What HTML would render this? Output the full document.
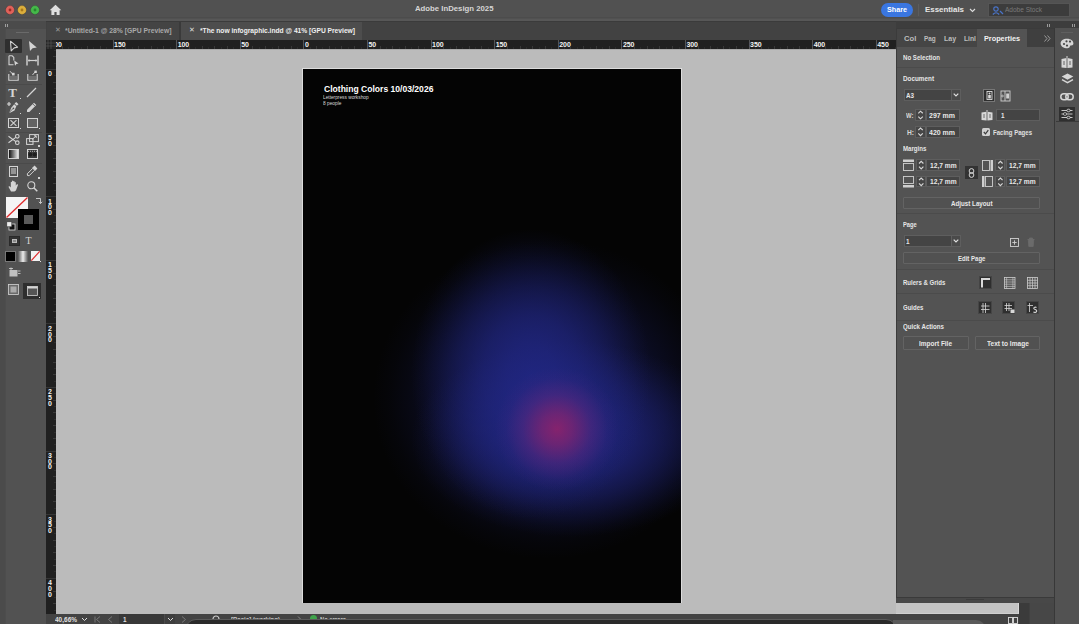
<!DOCTYPE html>
<html><head><meta charset="utf-8"><style>
*{margin:0;padding:0;box-sizing:border-box}
html,body{width:1079px;height:624px;overflow:hidden;background:#3f3f3f;font-family:"Liberation Sans",sans-serif;color:#ddd}
.a{position:absolute}
.t{position:absolute;white-space:nowrap;line-height:1}
svg{position:absolute;overflow:visible}
</style></head><body>
<div class="a" style="left:0px;top:0px;width:1079px;height:21px;background:#515151"></div>
<div class="a" style="left:0px;top:17px;width:1079px;height:1px;background:#4c4c4c"></div>
<div class="a" style="left:0px;top:19px;width:1079px;height:1.5px;background:#575757"></div>
<svg style="left:4.5px;top:4.5px;" width="10" height="10" viewBox="0 0 10 10"><circle cx="5" cy="5" r="4.4" fill="#e0625a" stroke="rgba(0,0,0,.25)" stroke-width=".6"/><circle cx="5" cy="5" r="1.4" fill="#8a1e18" opacity=".8"/></svg>
<svg style="left:17px;top:4.5px;" width="10" height="10" viewBox="0 0 10 10"><circle cx="5" cy="5" r="4.4" fill="#dcae3c" stroke="rgba(0,0,0,.25)" stroke-width=".6"/><circle cx="5" cy="5" r="1.4" fill="#9a6a10" opacity=".8"/></svg>
<svg style="left:29.5px;top:4.5px;" width="10" height="10" viewBox="0 0 10 10"><circle cx="5" cy="5" r="4.4" fill="#45b84a" stroke="rgba(0,0,0,.25)" stroke-width=".6"/><circle cx="5" cy="5" r="1.4" fill="#1f7a25" opacity=".8"/></svg>
<svg style="left:49px;top:4px;" width="13" height="12" viewBox="0 0 13 12"><path d="M6.5 0.8 L12.3 6.2 L10.6 6.2 L10.6 11 L7.6 11 L7.6 8 L5.4 8 L5.4 11 L2.4 11 L2.4 6.2 L0.7 6.2 Z" fill="#dedede"/></svg>
<div class="t" style="left:414.8px;top:4.60px;font-size:7.8px;color:#d6d6d6;font-weight:bold;font-family:'Liberation Sans';transform-origin:0 0;transform:scaleX(0.9955);">Adobe InDesign 2025</div>
<div class="a" style="left:881px;top:3px;width:32px;height:14px;background:#3a76e0;border-radius:7px"></div>
<div class="t" style="left:887px;top:6.23px;font-size:8px;color:#ffffff;font-weight:bold;font-family:'Liberation Sans';transform-origin:0 0;transform:scaleX(0.8995);">Share</div>
<div class="a" style="left:918px;top:4px;width:1px;height:12px;background:#5c5c5c"></div>
<div class="t" style="left:925px;top:6.23px;font-size:8px;color:#e6e6e6;font-weight:bold;font-family:'Liberation Sans';transform-origin:0 0;transform:scaleX(0.9854);">Essentials</div>
<svg style="left:969px;top:8px;" width="7" height="5" viewBox="0 0 7 5"><path d="M1 1 L3.5 3.5 L6 1" fill="none" stroke="#ddd" stroke-width="1.1"/></svg>
<div class="a" style="left:988px;top:3px;width:82px;height:14px;background:#3c3c3c;border:1px solid #555"></div>
<svg style="left:992px;top:6px;" width="12" height="9" viewBox="0 0 12 9"><circle cx="4" cy="3" r="2.2" fill="none" stroke="#4a74c8" stroke-width="1.2"/><path d="M0.8 8.5 Q4 5 7.2 8.5" fill="none" stroke="#4a74c8" stroke-width="1.2"/><path d="M8 5 L11 8" stroke="#4a74c8" stroke-width="1.2"/></svg>
<div class="t" style="left:1005px;top:6.25px;font-size:7.5px;color:#7a7a7a;font-weight:normal;font-family:'Liberation Sans';transform-origin:0 0;transform:scaleX(0.8700);">Adobe Stock</div>
<div class="a" style="left:0px;top:21px;width:1079px;height:603px;background:#3b3b3b"></div>
<div class="a" style="left:46px;top:21.5px;width:850px;height:18.5px;background:#424242"></div>
<div class="a" style="left:47px;top:21.5px;width:132px;height:18.5px;background:#444444"></div>
<div class="a" style="left:179px;top:21.5px;width:2px;height:18.5px;background:#3a3a3a"></div>
<div class="t" style="left:55px;top:26.5px;font-size:6.5px;color:#9a9a9a;font-weight:normal;">&#x2715;</div>
<div class="t" style="left:65.3px;top:27.13px;font-size:8px;color:#a8a8a8;font-weight:bold;font-family:'Liberation Sans';transform-origin:0 0;transform:scaleX(0.8471);">*Untitled-1 @ 28% [GPU Preview]</div>
<div class="a" style="left:181px;top:21.5px;width:181px;height:18.5px;background:#4d4d4d"></div>
<div class="t" style="left:189px;top:26.5px;font-size:6.5px;color:#dddddd;font-weight:normal;">&#x2715;</div>
<div class="t" style="left:199.7px;top:27.13px;font-size:8px;color:#f0f0f0;font-weight:bold;font-family:'Liberation Sans';transform-origin:0 0;transform:scaleX(0.8331);">*The now infographic.indd @ 41% [GPU Preview]</div>
<div class="a" style="left:0px;top:21px;width:46px;height:603px;background:#4b4b4b"></div>
<div class="a" style="left:5px;top:29px;width:41px;height:595px;background:#525252;border-left:1px solid #4d4d4d"></div>
<div class="a" style="left:4.5px;top:24px;width:1px;height:3px;background:#a0a0a0"></div>
<div class="a" style="left:6.5px;top:24px;width:1px;height:3px;background:#a0a0a0"></div>
<div class="a" style="left:16px;top:32px;width:13px;height:1px;background:#6a6a6a"></div>
<div class="a" style="left:56px;top:40px;width:840px;height:9px;background:#202020;overflow:hidden">
<div class="a" style="left:-7.10px;top:0;width:1px;height:9px;background:#555"></div>
<div class="t" style="left:-5.50px;top:1.2px;font-size:7px;color:#f2f2f2;font-weight:bold;letter-spacing:-0.1px">200</div>
<div class="a" style="left:-0.74px;top:7px;width:1px;height:2px;background:#2c2c2c"></div>
<div class="a" style="left:5.62px;top:6px;width:1px;height:3px;background:#383838"></div>
<div class="a" style="left:11.98px;top:7px;width:1px;height:2px;background:#2c2c2c"></div>
<div class="a" style="left:18.34px;top:6px;width:1px;height:3px;background:#383838"></div>
<div class="a" style="left:24.70px;top:7px;width:1px;height:2px;background:#2c2c2c"></div>
<div class="a" style="left:31.06px;top:6px;width:1px;height:3px;background:#383838"></div>
<div class="a" style="left:37.42px;top:7px;width:1px;height:2px;background:#2c2c2c"></div>
<div class="a" style="left:43.78px;top:6px;width:1px;height:3px;background:#383838"></div>
<div class="a" style="left:50.14px;top:7px;width:1px;height:2px;background:#2c2c2c"></div>
<div class="a" style="left:56.50px;top:0;width:1px;height:9px;background:#555"></div>
<div class="t" style="left:58.10px;top:1.2px;font-size:7px;color:#f2f2f2;font-weight:bold;letter-spacing:-0.1px">150</div>
<div class="a" style="left:62.86px;top:7px;width:1px;height:2px;background:#2c2c2c"></div>
<div class="a" style="left:69.22px;top:6px;width:1px;height:3px;background:#383838"></div>
<div class="a" style="left:75.58px;top:7px;width:1px;height:2px;background:#2c2c2c"></div>
<div class="a" style="left:81.94px;top:6px;width:1px;height:3px;background:#383838"></div>
<div class="a" style="left:88.30px;top:7px;width:1px;height:2px;background:#2c2c2c"></div>
<div class="a" style="left:94.66px;top:6px;width:1px;height:3px;background:#383838"></div>
<div class="a" style="left:101.02px;top:7px;width:1px;height:2px;background:#2c2c2c"></div>
<div class="a" style="left:107.38px;top:6px;width:1px;height:3px;background:#383838"></div>
<div class="a" style="left:113.74px;top:7px;width:1px;height:2px;background:#2c2c2c"></div>
<div class="a" style="left:120.10px;top:0;width:1px;height:9px;background:#555"></div>
<div class="t" style="left:121.70px;top:1.2px;font-size:7px;color:#f2f2f2;font-weight:bold;letter-spacing:-0.1px">100</div>
<div class="a" style="left:126.46px;top:7px;width:1px;height:2px;background:#2c2c2c"></div>
<div class="a" style="left:132.82px;top:6px;width:1px;height:3px;background:#383838"></div>
<div class="a" style="left:139.18px;top:7px;width:1px;height:2px;background:#2c2c2c"></div>
<div class="a" style="left:145.54px;top:6px;width:1px;height:3px;background:#383838"></div>
<div class="a" style="left:151.90px;top:7px;width:1px;height:2px;background:#2c2c2c"></div>
<div class="a" style="left:158.26px;top:6px;width:1px;height:3px;background:#383838"></div>
<div class="a" style="left:164.62px;top:7px;width:1px;height:2px;background:#2c2c2c"></div>
<div class="a" style="left:170.98px;top:6px;width:1px;height:3px;background:#383838"></div>
<div class="a" style="left:177.34px;top:7px;width:1px;height:2px;background:#2c2c2c"></div>
<div class="a" style="left:183.70px;top:0;width:1px;height:9px;background:#555"></div>
<div class="t" style="left:185.30px;top:1.2px;font-size:7px;color:#f2f2f2;font-weight:bold;letter-spacing:-0.1px">50</div>
<div class="a" style="left:190.06px;top:7px;width:1px;height:2px;background:#2c2c2c"></div>
<div class="a" style="left:196.42px;top:6px;width:1px;height:3px;background:#383838"></div>
<div class="a" style="left:202.78px;top:7px;width:1px;height:2px;background:#2c2c2c"></div>
<div class="a" style="left:209.14px;top:6px;width:1px;height:3px;background:#383838"></div>
<div class="a" style="left:215.50px;top:7px;width:1px;height:2px;background:#2c2c2c"></div>
<div class="a" style="left:221.86px;top:6px;width:1px;height:3px;background:#383838"></div>
<div class="a" style="left:228.22px;top:7px;width:1px;height:2px;background:#2c2c2c"></div>
<div class="a" style="left:234.58px;top:6px;width:1px;height:3px;background:#383838"></div>
<div class="a" style="left:240.94px;top:7px;width:1px;height:2px;background:#2c2c2c"></div>
<div class="a" style="left:247.30px;top:0;width:1px;height:9px;background:#555"></div>
<div class="t" style="left:248.90px;top:1.2px;font-size:7px;color:#f2f2f2;font-weight:bold;letter-spacing:-0.1px">0</div>
<div class="a" style="left:253.66px;top:7px;width:1px;height:2px;background:#2c2c2c"></div>
<div class="a" style="left:260.02px;top:6px;width:1px;height:3px;background:#383838"></div>
<div class="a" style="left:266.38px;top:7px;width:1px;height:2px;background:#2c2c2c"></div>
<div class="a" style="left:272.74px;top:6px;width:1px;height:3px;background:#383838"></div>
<div class="a" style="left:279.10px;top:7px;width:1px;height:2px;background:#2c2c2c"></div>
<div class="a" style="left:285.46px;top:6px;width:1px;height:3px;background:#383838"></div>
<div class="a" style="left:291.82px;top:7px;width:1px;height:2px;background:#2c2c2c"></div>
<div class="a" style="left:298.18px;top:6px;width:1px;height:3px;background:#383838"></div>
<div class="a" style="left:304.54px;top:7px;width:1px;height:2px;background:#2c2c2c"></div>
<div class="a" style="left:310.90px;top:0;width:1px;height:9px;background:#555"></div>
<div class="t" style="left:312.50px;top:1.2px;font-size:7px;color:#f2f2f2;font-weight:bold;letter-spacing:-0.1px">50</div>
<div class="a" style="left:317.26px;top:7px;width:1px;height:2px;background:#2c2c2c"></div>
<div class="a" style="left:323.62px;top:6px;width:1px;height:3px;background:#383838"></div>
<div class="a" style="left:329.98px;top:7px;width:1px;height:2px;background:#2c2c2c"></div>
<div class="a" style="left:336.34px;top:6px;width:1px;height:3px;background:#383838"></div>
<div class="a" style="left:342.70px;top:7px;width:1px;height:2px;background:#2c2c2c"></div>
<div class="a" style="left:349.06px;top:6px;width:1px;height:3px;background:#383838"></div>
<div class="a" style="left:355.42px;top:7px;width:1px;height:2px;background:#2c2c2c"></div>
<div class="a" style="left:361.78px;top:6px;width:1px;height:3px;background:#383838"></div>
<div class="a" style="left:368.14px;top:7px;width:1px;height:2px;background:#2c2c2c"></div>
<div class="a" style="left:374.50px;top:0;width:1px;height:9px;background:#555"></div>
<div class="t" style="left:376.10px;top:1.2px;font-size:7px;color:#f2f2f2;font-weight:bold;letter-spacing:-0.1px">100</div>
<div class="a" style="left:380.86px;top:7px;width:1px;height:2px;background:#2c2c2c"></div>
<div class="a" style="left:387.22px;top:6px;width:1px;height:3px;background:#383838"></div>
<div class="a" style="left:393.58px;top:7px;width:1px;height:2px;background:#2c2c2c"></div>
<div class="a" style="left:399.94px;top:6px;width:1px;height:3px;background:#383838"></div>
<div class="a" style="left:406.30px;top:7px;width:1px;height:2px;background:#2c2c2c"></div>
<div class="a" style="left:412.66px;top:6px;width:1px;height:3px;background:#383838"></div>
<div class="a" style="left:419.02px;top:7px;width:1px;height:2px;background:#2c2c2c"></div>
<div class="a" style="left:425.38px;top:6px;width:1px;height:3px;background:#383838"></div>
<div class="a" style="left:431.74px;top:7px;width:1px;height:2px;background:#2c2c2c"></div>
<div class="a" style="left:438.10px;top:0;width:1px;height:9px;background:#555"></div>
<div class="t" style="left:439.70px;top:1.2px;font-size:7px;color:#f2f2f2;font-weight:bold;letter-spacing:-0.1px">150</div>
<div class="a" style="left:444.46px;top:7px;width:1px;height:2px;background:#2c2c2c"></div>
<div class="a" style="left:450.82px;top:6px;width:1px;height:3px;background:#383838"></div>
<div class="a" style="left:457.18px;top:7px;width:1px;height:2px;background:#2c2c2c"></div>
<div class="a" style="left:463.54px;top:6px;width:1px;height:3px;background:#383838"></div>
<div class="a" style="left:469.90px;top:7px;width:1px;height:2px;background:#2c2c2c"></div>
<div class="a" style="left:476.26px;top:6px;width:1px;height:3px;background:#383838"></div>
<div class="a" style="left:482.62px;top:7px;width:1px;height:2px;background:#2c2c2c"></div>
<div class="a" style="left:488.98px;top:6px;width:1px;height:3px;background:#383838"></div>
<div class="a" style="left:495.34px;top:7px;width:1px;height:2px;background:#2c2c2c"></div>
<div class="a" style="left:501.70px;top:0;width:1px;height:9px;background:#555"></div>
<div class="t" style="left:503.30px;top:1.2px;font-size:7px;color:#f2f2f2;font-weight:bold;letter-spacing:-0.1px">200</div>
<div class="a" style="left:508.06px;top:7px;width:1px;height:2px;background:#2c2c2c"></div>
<div class="a" style="left:514.42px;top:6px;width:1px;height:3px;background:#383838"></div>
<div class="a" style="left:520.78px;top:7px;width:1px;height:2px;background:#2c2c2c"></div>
<div class="a" style="left:527.14px;top:6px;width:1px;height:3px;background:#383838"></div>
<div class="a" style="left:533.50px;top:7px;width:1px;height:2px;background:#2c2c2c"></div>
<div class="a" style="left:539.86px;top:6px;width:1px;height:3px;background:#383838"></div>
<div class="a" style="left:546.22px;top:7px;width:1px;height:2px;background:#2c2c2c"></div>
<div class="a" style="left:552.58px;top:6px;width:1px;height:3px;background:#383838"></div>
<div class="a" style="left:558.94px;top:7px;width:1px;height:2px;background:#2c2c2c"></div>
<div class="a" style="left:565.30px;top:0;width:1px;height:9px;background:#555"></div>
<div class="t" style="left:566.90px;top:1.2px;font-size:7px;color:#f2f2f2;font-weight:bold;letter-spacing:-0.1px">250</div>
<div class="a" style="left:571.66px;top:7px;width:1px;height:2px;background:#2c2c2c"></div>
<div class="a" style="left:578.02px;top:6px;width:1px;height:3px;background:#383838"></div>
<div class="a" style="left:584.38px;top:7px;width:1px;height:2px;background:#2c2c2c"></div>
<div class="a" style="left:590.74px;top:6px;width:1px;height:3px;background:#383838"></div>
<div class="a" style="left:597.10px;top:7px;width:1px;height:2px;background:#2c2c2c"></div>
<div class="a" style="left:603.46px;top:6px;width:1px;height:3px;background:#383838"></div>
<div class="a" style="left:609.82px;top:7px;width:1px;height:2px;background:#2c2c2c"></div>
<div class="a" style="left:616.18px;top:6px;width:1px;height:3px;background:#383838"></div>
<div class="a" style="left:622.54px;top:7px;width:1px;height:2px;background:#2c2c2c"></div>
<div class="a" style="left:628.90px;top:0;width:1px;height:9px;background:#555"></div>
<div class="t" style="left:630.50px;top:1.2px;font-size:7px;color:#f2f2f2;font-weight:bold;letter-spacing:-0.1px">300</div>
<div class="a" style="left:635.26px;top:7px;width:1px;height:2px;background:#2c2c2c"></div>
<div class="a" style="left:641.62px;top:6px;width:1px;height:3px;background:#383838"></div>
<div class="a" style="left:647.98px;top:7px;width:1px;height:2px;background:#2c2c2c"></div>
<div class="a" style="left:654.34px;top:6px;width:1px;height:3px;background:#383838"></div>
<div class="a" style="left:660.70px;top:7px;width:1px;height:2px;background:#2c2c2c"></div>
<div class="a" style="left:667.06px;top:6px;width:1px;height:3px;background:#383838"></div>
<div class="a" style="left:673.42px;top:7px;width:1px;height:2px;background:#2c2c2c"></div>
<div class="a" style="left:679.78px;top:6px;width:1px;height:3px;background:#383838"></div>
<div class="a" style="left:686.14px;top:7px;width:1px;height:2px;background:#2c2c2c"></div>
<div class="a" style="left:692.50px;top:0;width:1px;height:9px;background:#555"></div>
<div class="t" style="left:694.10px;top:1.2px;font-size:7px;color:#f2f2f2;font-weight:bold;letter-spacing:-0.1px">350</div>
<div class="a" style="left:698.86px;top:7px;width:1px;height:2px;background:#2c2c2c"></div>
<div class="a" style="left:705.22px;top:6px;width:1px;height:3px;background:#383838"></div>
<div class="a" style="left:711.58px;top:7px;width:1px;height:2px;background:#2c2c2c"></div>
<div class="a" style="left:717.94px;top:6px;width:1px;height:3px;background:#383838"></div>
<div class="a" style="left:724.30px;top:7px;width:1px;height:2px;background:#2c2c2c"></div>
<div class="a" style="left:730.66px;top:6px;width:1px;height:3px;background:#383838"></div>
<div class="a" style="left:737.02px;top:7px;width:1px;height:2px;background:#2c2c2c"></div>
<div class="a" style="left:743.38px;top:6px;width:1px;height:3px;background:#383838"></div>
<div class="a" style="left:749.74px;top:7px;width:1px;height:2px;background:#2c2c2c"></div>
<div class="a" style="left:756.10px;top:0;width:1px;height:9px;background:#555"></div>
<div class="t" style="left:757.70px;top:1.2px;font-size:7px;color:#f2f2f2;font-weight:bold;letter-spacing:-0.1px">400</div>
<div class="a" style="left:762.46px;top:7px;width:1px;height:2px;background:#2c2c2c"></div>
<div class="a" style="left:768.82px;top:6px;width:1px;height:3px;background:#383838"></div>
<div class="a" style="left:775.18px;top:7px;width:1px;height:2px;background:#2c2c2c"></div>
<div class="a" style="left:781.54px;top:6px;width:1px;height:3px;background:#383838"></div>
<div class="a" style="left:787.90px;top:7px;width:1px;height:2px;background:#2c2c2c"></div>
<div class="a" style="left:794.26px;top:6px;width:1px;height:3px;background:#383838"></div>
<div class="a" style="left:800.62px;top:7px;width:1px;height:2px;background:#2c2c2c"></div>
<div class="a" style="left:806.98px;top:6px;width:1px;height:3px;background:#383838"></div>
<div class="a" style="left:813.34px;top:7px;width:1px;height:2px;background:#2c2c2c"></div>
<div class="a" style="left:819.70px;top:0;width:1px;height:9px;background:#555"></div>
<div class="t" style="left:821.30px;top:1.2px;font-size:7px;color:#f2f2f2;font-weight:bold;letter-spacing:-0.1px">450</div>
<div class="a" style="left:826.06px;top:7px;width:1px;height:2px;background:#2c2c2c"></div>
<div class="a" style="left:832.42px;top:6px;width:1px;height:3px;background:#383838"></div>
<div class="a" style="left:838.78px;top:7px;width:1px;height:2px;background:#2c2c2c"></div>
<div class="a" style="left:845.14px;top:6px;width:1px;height:3px;background:#383838"></div>
<div class="a" style="left:851.50px;top:7px;width:1px;height:2px;background:#2c2c2c"></div>
</div>
<div class="a" style="left:46px;top:49px;width:10px;height:565px;background:#202020;overflow:hidden">
<div class="a" style="left:7px;top:-5.44px;width:3px;height:1px;background:#3a3a3a"></div>
<div class="a" style="left:8px;top:0.92px;width:2px;height:1px;background:#2e2e2e"></div>
<div class="a" style="left:7px;top:7.28px;width:3px;height:1px;background:#3a3a3a"></div>
<div class="a" style="left:8px;top:13.64px;width:2px;height:1px;background:#2e2e2e"></div>
<div class="a" style="left:0;top:20.00px;width:10px;height:1px;background:#363636"></div>
<div class="t" style="left:2.1px;top:21.37px;font-size:7px;color:#f0f0f0;font-weight:bold">0</div>
<div class="a" style="left:8px;top:26.36px;width:2px;height:1px;background:#2e2e2e"></div>
<div class="a" style="left:7px;top:32.72px;width:3px;height:1px;background:#3a3a3a"></div>
<div class="a" style="left:8px;top:39.08px;width:2px;height:1px;background:#2e2e2e"></div>
<div class="a" style="left:7px;top:45.44px;width:3px;height:1px;background:#3a3a3a"></div>
<div class="a" style="left:8px;top:51.80px;width:2px;height:1px;background:#2e2e2e"></div>
<div class="a" style="left:7px;top:58.16px;width:3px;height:1px;background:#3a3a3a"></div>
<div class="a" style="left:8px;top:64.52px;width:2px;height:1px;background:#2e2e2e"></div>
<div class="a" style="left:7px;top:70.88px;width:3px;height:1px;background:#3a3a3a"></div>
<div class="a" style="left:8px;top:77.24px;width:2px;height:1px;background:#2e2e2e"></div>
<div class="a" style="left:0;top:83.60px;width:10px;height:1px;background:#363636"></div>
<div class="t" style="left:2.1px;top:84.97px;font-size:7px;color:#f0f0f0;font-weight:bold">5</div>
<div class="t" style="left:2.1px;top:90.72px;font-size:7px;color:#f0f0f0;font-weight:bold">0</div>
<div class="a" style="left:8px;top:89.96px;width:2px;height:1px;background:#2e2e2e"></div>
<div class="a" style="left:7px;top:96.32px;width:3px;height:1px;background:#3a3a3a"></div>
<div class="a" style="left:8px;top:102.68px;width:2px;height:1px;background:#2e2e2e"></div>
<div class="a" style="left:7px;top:109.04px;width:3px;height:1px;background:#3a3a3a"></div>
<div class="a" style="left:8px;top:115.40px;width:2px;height:1px;background:#2e2e2e"></div>
<div class="a" style="left:7px;top:121.76px;width:3px;height:1px;background:#3a3a3a"></div>
<div class="a" style="left:8px;top:128.12px;width:2px;height:1px;background:#2e2e2e"></div>
<div class="a" style="left:7px;top:134.48px;width:3px;height:1px;background:#3a3a3a"></div>
<div class="a" style="left:8px;top:140.84px;width:2px;height:1px;background:#2e2e2e"></div>
<div class="a" style="left:0;top:147.20px;width:10px;height:1px;background:#363636"></div>
<div class="t" style="left:2.1px;top:148.57px;font-size:7px;color:#f0f0f0;font-weight:bold">1</div>
<div class="t" style="left:2.1px;top:154.32px;font-size:7px;color:#f0f0f0;font-weight:bold">0</div>
<div class="t" style="left:2.1px;top:160.07px;font-size:7px;color:#f0f0f0;font-weight:bold">0</div>
<div class="a" style="left:8px;top:153.56px;width:2px;height:1px;background:#2e2e2e"></div>
<div class="a" style="left:7px;top:159.92px;width:3px;height:1px;background:#3a3a3a"></div>
<div class="a" style="left:8px;top:166.28px;width:2px;height:1px;background:#2e2e2e"></div>
<div class="a" style="left:7px;top:172.64px;width:3px;height:1px;background:#3a3a3a"></div>
<div class="a" style="left:8px;top:179.00px;width:2px;height:1px;background:#2e2e2e"></div>
<div class="a" style="left:7px;top:185.36px;width:3px;height:1px;background:#3a3a3a"></div>
<div class="a" style="left:8px;top:191.72px;width:2px;height:1px;background:#2e2e2e"></div>
<div class="a" style="left:7px;top:198.08px;width:3px;height:1px;background:#3a3a3a"></div>
<div class="a" style="left:8px;top:204.44px;width:2px;height:1px;background:#2e2e2e"></div>
<div class="a" style="left:0;top:210.80px;width:10px;height:1px;background:#363636"></div>
<div class="t" style="left:2.1px;top:212.17px;font-size:7px;color:#f0f0f0;font-weight:bold">1</div>
<div class="t" style="left:2.1px;top:217.92px;font-size:7px;color:#f0f0f0;font-weight:bold">5</div>
<div class="t" style="left:2.1px;top:223.67px;font-size:7px;color:#f0f0f0;font-weight:bold">0</div>
<div class="a" style="left:8px;top:217.16px;width:2px;height:1px;background:#2e2e2e"></div>
<div class="a" style="left:7px;top:223.52px;width:3px;height:1px;background:#3a3a3a"></div>
<div class="a" style="left:8px;top:229.88px;width:2px;height:1px;background:#2e2e2e"></div>
<div class="a" style="left:7px;top:236.24px;width:3px;height:1px;background:#3a3a3a"></div>
<div class="a" style="left:8px;top:242.60px;width:2px;height:1px;background:#2e2e2e"></div>
<div class="a" style="left:7px;top:248.96px;width:3px;height:1px;background:#3a3a3a"></div>
<div class="a" style="left:8px;top:255.32px;width:2px;height:1px;background:#2e2e2e"></div>
<div class="a" style="left:7px;top:261.68px;width:3px;height:1px;background:#3a3a3a"></div>
<div class="a" style="left:8px;top:268.04px;width:2px;height:1px;background:#2e2e2e"></div>
<div class="a" style="left:0;top:274.40px;width:10px;height:1px;background:#363636"></div>
<div class="t" style="left:2.1px;top:275.77px;font-size:7px;color:#f0f0f0;font-weight:bold">2</div>
<div class="t" style="left:2.1px;top:281.52px;font-size:7px;color:#f0f0f0;font-weight:bold">0</div>
<div class="t" style="left:2.1px;top:287.27px;font-size:7px;color:#f0f0f0;font-weight:bold">0</div>
<div class="a" style="left:8px;top:280.76px;width:2px;height:1px;background:#2e2e2e"></div>
<div class="a" style="left:7px;top:287.12px;width:3px;height:1px;background:#3a3a3a"></div>
<div class="a" style="left:8px;top:293.48px;width:2px;height:1px;background:#2e2e2e"></div>
<div class="a" style="left:7px;top:299.84px;width:3px;height:1px;background:#3a3a3a"></div>
<div class="a" style="left:8px;top:306.20px;width:2px;height:1px;background:#2e2e2e"></div>
<div class="a" style="left:7px;top:312.56px;width:3px;height:1px;background:#3a3a3a"></div>
<div class="a" style="left:8px;top:318.92px;width:2px;height:1px;background:#2e2e2e"></div>
<div class="a" style="left:7px;top:325.28px;width:3px;height:1px;background:#3a3a3a"></div>
<div class="a" style="left:8px;top:331.64px;width:2px;height:1px;background:#2e2e2e"></div>
<div class="a" style="left:0;top:338.00px;width:10px;height:1px;background:#363636"></div>
<div class="t" style="left:2.1px;top:339.37px;font-size:7px;color:#f0f0f0;font-weight:bold">2</div>
<div class="t" style="left:2.1px;top:345.12px;font-size:7px;color:#f0f0f0;font-weight:bold">5</div>
<div class="t" style="left:2.1px;top:350.87px;font-size:7px;color:#f0f0f0;font-weight:bold">0</div>
<div class="a" style="left:8px;top:344.36px;width:2px;height:1px;background:#2e2e2e"></div>
<div class="a" style="left:7px;top:350.72px;width:3px;height:1px;background:#3a3a3a"></div>
<div class="a" style="left:8px;top:357.08px;width:2px;height:1px;background:#2e2e2e"></div>
<div class="a" style="left:7px;top:363.44px;width:3px;height:1px;background:#3a3a3a"></div>
<div class="a" style="left:8px;top:369.80px;width:2px;height:1px;background:#2e2e2e"></div>
<div class="a" style="left:7px;top:376.16px;width:3px;height:1px;background:#3a3a3a"></div>
<div class="a" style="left:8px;top:382.52px;width:2px;height:1px;background:#2e2e2e"></div>
<div class="a" style="left:7px;top:388.88px;width:3px;height:1px;background:#3a3a3a"></div>
<div class="a" style="left:8px;top:395.24px;width:2px;height:1px;background:#2e2e2e"></div>
<div class="a" style="left:0;top:401.60px;width:10px;height:1px;background:#363636"></div>
<div class="t" style="left:2.1px;top:402.97px;font-size:7px;color:#f0f0f0;font-weight:bold">3</div>
<div class="t" style="left:2.1px;top:408.72px;font-size:7px;color:#f0f0f0;font-weight:bold">0</div>
<div class="t" style="left:2.1px;top:414.47px;font-size:7px;color:#f0f0f0;font-weight:bold">0</div>
<div class="a" style="left:8px;top:407.96px;width:2px;height:1px;background:#2e2e2e"></div>
<div class="a" style="left:7px;top:414.32px;width:3px;height:1px;background:#3a3a3a"></div>
<div class="a" style="left:8px;top:420.68px;width:2px;height:1px;background:#2e2e2e"></div>
<div class="a" style="left:7px;top:427.04px;width:3px;height:1px;background:#3a3a3a"></div>
<div class="a" style="left:8px;top:433.40px;width:2px;height:1px;background:#2e2e2e"></div>
<div class="a" style="left:7px;top:439.76px;width:3px;height:1px;background:#3a3a3a"></div>
<div class="a" style="left:8px;top:446.12px;width:2px;height:1px;background:#2e2e2e"></div>
<div class="a" style="left:7px;top:452.48px;width:3px;height:1px;background:#3a3a3a"></div>
<div class="a" style="left:8px;top:458.84px;width:2px;height:1px;background:#2e2e2e"></div>
<div class="a" style="left:0;top:465.20px;width:10px;height:1px;background:#363636"></div>
<div class="t" style="left:2.1px;top:466.57px;font-size:7px;color:#f0f0f0;font-weight:bold">3</div>
<div class="t" style="left:2.1px;top:472.32px;font-size:7px;color:#f0f0f0;font-weight:bold">5</div>
<div class="t" style="left:2.1px;top:478.07px;font-size:7px;color:#f0f0f0;font-weight:bold">0</div>
<div class="a" style="left:8px;top:471.56px;width:2px;height:1px;background:#2e2e2e"></div>
<div class="a" style="left:7px;top:477.92px;width:3px;height:1px;background:#3a3a3a"></div>
<div class="a" style="left:8px;top:484.28px;width:2px;height:1px;background:#2e2e2e"></div>
<div class="a" style="left:7px;top:490.64px;width:3px;height:1px;background:#3a3a3a"></div>
<div class="a" style="left:8px;top:497.00px;width:2px;height:1px;background:#2e2e2e"></div>
<div class="a" style="left:7px;top:503.36px;width:3px;height:1px;background:#3a3a3a"></div>
<div class="a" style="left:8px;top:509.72px;width:2px;height:1px;background:#2e2e2e"></div>
<div class="a" style="left:7px;top:516.08px;width:3px;height:1px;background:#3a3a3a"></div>
<div class="a" style="left:8px;top:522.44px;width:2px;height:1px;background:#2e2e2e"></div>
<div class="a" style="left:0;top:528.80px;width:10px;height:1px;background:#363636"></div>
<div class="t" style="left:2.1px;top:530.17px;font-size:7px;color:#f0f0f0;font-weight:bold">4</div>
<div class="t" style="left:2.1px;top:535.92px;font-size:7px;color:#f0f0f0;font-weight:bold">0</div>
<div class="t" style="left:2.1px;top:541.67px;font-size:7px;color:#f0f0f0;font-weight:bold">0</div>
<div class="a" style="left:8px;top:535.16px;width:2px;height:1px;background:#2e2e2e"></div>
<div class="a" style="left:7px;top:541.52px;width:3px;height:1px;background:#3a3a3a"></div>
<div class="a" style="left:8px;top:547.88px;width:2px;height:1px;background:#2e2e2e"></div>
<div class="a" style="left:7px;top:554.24px;width:3px;height:1px;background:#3a3a3a"></div>
<div class="a" style="left:8px;top:560.60px;width:2px;height:1px;background:#2e2e2e"></div>
<div class="a" style="left:7px;top:566.96px;width:3px;height:1px;background:#3a3a3a"></div>
<div class="a" style="left:8px;top:573.32px;width:2px;height:1px;background:#2e2e2e"></div>
</div>
<div class="a" style="left:46px;top:40px;width:10px;height:9px;background:#262626"></div>
<svg style="left:46px;top:40px;" width="10" height="9" viewBox="0 0 10 9"><path d="M2 0 V9 M5 0 V9 M0 3 H10 M0 6 H10" stroke="#555" stroke-width="0.7"/></svg>
<div class="a" style="left:56px;top:49px;width:840px;height:565px;background:#bbbbbb"></div>
<div class="a" style="left:56px;top:49px;width:840px;height:1px;background:#a8a8a8"></div>
<div class="a" style="left:302px;top:68px;width:380px;height:537px;background:#dcdcdc"></div>
<div class="a" style="left:303px;top:69px;width:378px;height:535px;background:radial-gradient(circle 62px at 254px 360px, rgba(155,34,105,.82) 0%, rgba(145,36,110,.66) 25%, rgba(120,40,125,.36) 55%, rgba(95,40,130,.1) 82%, rgba(90,40,130,0) 100%), radial-gradient(ellipse 120px 145px at 228px 305px, rgba(34,40,136,0.800) 0%, rgba(34,40,136,0.744) 20%, rgba(34,40,136,0.608) 40%, rgba(34,40,136,0.400) 60%, rgba(34,40,136,0.192) 78%, rgba(34,40,136,0.072) 90%, rgba(34,40,136,0.000) 100%), radial-gradient(ellipse 160px 98px at 268px 370px, rgba(34,40,136,0.800) 0%, rgba(34,40,136,0.744) 20%, rgba(34,40,136,0.608) 40%, rgba(34,40,136,0.400) 60%, rgba(34,40,136,0.192) 78%, rgba(34,40,136,0.072) 90%, rgba(34,40,136,0.000) 100%), radial-gradient(ellipse 175px 160px at 245px 330px, rgba(34,40,136,0.500) 0%, rgba(34,40,136,0.465) 20%, rgba(34,40,136,0.380) 40%, rgba(34,40,136,0.250) 60%, rgba(34,40,136,0.120) 78%, rgba(34,40,136,0.045) 90%, rgba(34,40,136,0.000) 100%), #040404"></div>
<div class="t" style="left:323.6px;top:84.97px;font-size:8.3px;color:#ffffff;font-weight:bold;font-family:'Liberation Sans';transform-origin:0 0;transform:scaleX(1.0316);">Clothing Colors 10/03/2026</div>
<div class="t" style="left:323.4px;top:95.17px;font-size:5px;color:#d8d8d8;font-weight:normal;font-family:'Liberation Sans';transform-origin:0 0;transform:scaleX(0.9540);">Letterpress workshop</div>
<div class="t" style="left:323.4px;top:101.37px;font-size:5px;color:#d8d8d8;font-weight:normal;font-family:'Liberation Sans';transform-origin:0 0;transform:scaleX(0.9591);">8 people</div>
<div class="a" style="left:896px;top:21px;width:183px;height:603px;background:#3d3d3d"></div>
<div class="a" style="left:1046.5px;top:24px;width:1px;height:3px;background:#9a9a9a"></div>
<div class="a" style="left:1048.5px;top:24px;width:1px;height:3px;background:#9a9a9a"></div>
<div class="a" style="left:1071.5px;top:24px;width:1px;height:3px;background:#9a9a9a"></div>
<div class="a" style="left:1073.5px;top:24px;width:1px;height:3px;background:#9a9a9a"></div>
<div class="a" style="left:896px;top:28px;width:159px;height:575px;background:#535353;border:1px solid #3b3b3b"></div>
<div class="a" style="left:896px;top:597px;width:159px;height:6px;background:#484848;border-top:1px solid #3a3a3a"></div>
<div class="a" style="left:966px;top:599px;width:18px;height:1px;background:#3c3c3c"></div>
<div class="a" style="left:897px;top:29px;width:157px;height:18px;background:#454545"></div>
<div class="a" style="left:977px;top:29px;width:50px;height:18px;background:#535353"></div>
<div class="a" style="left:1027px;top:29px;width:27px;height:18px;background:#3f3f3f"></div>
<div class="t" style="left:903.7px;top:35.31px;font-size:7.2px;color:#bdbdbd;font-weight:bold;font-family:'Liberation Sans';transform-origin:0 0;transform:scaleX(1.0624);">Col</div>
<div class="t" style="left:924.2px;top:35.31px;font-size:7.2px;color:#bdbdbd;font-weight:bold;font-family:'Liberation Sans';transform-origin:0 0;transform:scaleX(0.8952);">Pag</div>
<div class="t" style="left:943.8px;top:35.31px;font-size:7.2px;color:#bdbdbd;font-weight:bold;font-family:'Liberation Sans';transform-origin:0 0;transform:scaleX(0.9851);">Lay</div>
<div class="t" style="left:964px;top:35.31px;font-size:7.2px;color:#bdbdbd;font-weight:bold;font-family:'Liberation Sans';transform-origin:0 0;transform:scaleX(0.9394);">Linl</div>
<div class="t" style="left:983.8px;top:35.31px;font-size:7.2px;color:#f2f2f2;font-weight:bold;font-family:'Liberation Sans';transform-origin:0 0;transform:scaleX(1.0154);">Properties</div>
<svg style="left:1044px;top:35px;" width="7" height="7" viewBox="0 0 7 7"><path d="M0.5 0.5 L3 3.5 L0.5 6.5 M3.5 0.5 L6 3.5 L3.5 6.5" fill="none" stroke="#9a9a9a" stroke-width="1"/></svg>
<div class="t" style="left:903.1px;top:53.81px;font-size:7.2px;color:#e6e6e6;font-weight:bold;font-family:'Liberation Sans';transform-origin:0 0;transform:scaleX(0.8499);">No Selection</div>
<div class="a" style="left:897px;top:67px;width:157px;height:1px;background:#4b4b4b"></div>
<div class="t" style="left:902.7px;top:75.01px;font-size:7.2px;color:#e6e6e6;font-weight:bold;font-family:'Liberation Sans';transform-origin:0 0;transform:scaleX(0.8822);">Document</div>
<div class="a" style="left:904px;top:88.5px;width:56.5px;height:12.7px;background:#444444;border:1px solid #5e5e5e"></div>
<div class="a" style="left:950.5px;top:88.5px;width:10px;height:12.7px;background:#4a4a4a;border:1px solid #5e5e5e"></div>
<div class="t" style="left:905.5px;top:92.27px;font-size:7px;color:#e8e8e8;font-weight:bold;font-family:'Liberation Sans';transform-origin:0 0;transform:scaleX(0.8940);">A3</div>
<svg style="left:952.5px;top:93.0px;" width="6" height="4" viewBox="0 0 6 4"><path d="M0.7 0.7 L3 3 L5.3 0.7" fill="none" stroke="#e0e0e0" stroke-width="1.2"/></svg>
<div class="a" style="left:982.8px;top:89.3px;width:12.6px;height:12.6px;background:#2e2e2e;border:1px solid #777"></div>
<svg style="left:983.8px;top:90.3px;" width="11" height="11" viewBox="0 0 11 11"><rect x="3" y="1.5" width="5" height="8" fill="none" stroke="#ddd" stroke-width=".9"/><circle cx="5.5" cy="3.5" r="1" fill="#ddd"/><rect x="4.2" y="5" width="2.6" height="3.5" fill="#ddd"/></svg>
<svg style="left:999.5px;top:89.5px;" width="11" height="12" viewBox="0 0 11 12"><rect x="1" y="1" width="9" height="10" fill="none" stroke="#cfcfcf" stroke-width=".9"/><path d="M5 1 V11" stroke="#cfcfcf" stroke-width=".9"/><path d="M1.5 6 H4 M2.8 4.8 L1.5 6 L2.8 7.2" fill="none" stroke="#cfcfcf" stroke-width=".8"/><rect x="6.2" y="3.5" width="2.8" height="5" fill="#cfcfcf"/></svg>
<div class="t" style="left:906.4px;top:111.57px;font-size:7px;color:#d8d8d8;font-weight:bold;font-family:'Liberation Sans';transform-origin:0 0;transform:scaleX(0.8398);">W:</div>
<div class="t" style="left:906.6px;top:128.57px;font-size:7px;color:#d8d8d8;font-weight:bold;font-family:'Liberation Sans';transform-origin:0 0;transform:scaleX(0.9477);">H:</div>
<div class="a" style="left:915.3px;top:109.3px;width:11.1px;height:11.9px;background:#464646;border:1px solid #5e5e5e"></div>
<svg style="left:915.3px;top:109.3px;" width="11.1" height="11.9" viewBox="0 0 11.1 11.9"><path d="M3.3 4.3 L5.5 2.2 L7.8 4.3 M3.3 7.6 L5.5 9.8 L7.8 7.6" fill="none" stroke="#d8d8d8" stroke-width="1.15"/></svg>
<div class="a" style="left:926.4px;top:109.3px;width:34.1px;height:11.9px;background:#444444;border:1px solid #5e5e5e"></div>
<div class="t" style="left:929.4px;top:111.57px;font-size:7px;color:#e8e8e8;font-weight:bold;font-family:'Liberation Sans';transform-origin:0 0;transform:scaleX(0.9972);">297 mm</div>
<div class="a" style="left:915.3px;top:126px;width:11.1px;height:11.5px;background:#464646;border:1px solid #5e5e5e"></div>
<svg style="left:915.3px;top:126px;" width="11.1" height="11.5" viewBox="0 0 11.1 11.5"><path d="M3.3 4.2 L5.5 2.0 L7.8 4.2 M3.3 7.3 L5.5 9.6 L7.8 7.3" fill="none" stroke="#d8d8d8" stroke-width="1.15"/></svg>
<div class="a" style="left:926.4px;top:126px;width:34.1px;height:11.5px;background:#444444;border:1px solid #5e5e5e"></div>
<div class="t" style="left:929.4px;top:128.57px;font-size:7px;color:#e8e8e8;font-weight:bold;font-family:'Liberation Sans';transform-origin:0 0;transform:scaleX(0.9972);">420 mm</div>
<svg style="left:980.6px;top:109.5px;" width="12" height="11" viewBox="0 0 12 11"><path d="M0.5 2.5 L5.6 1.8 V10.5 L0.5 10 Z M6.4 1.8 L11.5 2.5 V10 L6.4 10.5 Z" fill="#d8d8d8"/><path d="M6 0 V1.8" stroke="#d8d8d8" stroke-width="1"/><path d="M3 4 V8 M9 4 V8" stroke="#535353" stroke-width=".8"/></svg>
<div class="a" style="left:996.1px;top:109.3px;width:43.8px;height:11.9px;background:#444444;border:1px solid #5e5e5e"></div>
<div class="t" style="left:1000.5px;top:111.57px;font-size:7px;color:#e8e8e8;font-weight:bold;font-family:'Liberation Sans';transform-origin:0 0;transform:scaleX(0.8990);">1</div>
<div class="a" style="left:982px;top:127.9px;width:7.8px;height:8.1px;background:#cfcfcf;border-radius:1.5px"></div>
<svg style="left:982px;top:127.9px;" width="8" height="8" viewBox="0 0 8 8"><path d="M1.8 4 L3.5 5.8 L6.3 2.2" fill="none" stroke="#3a3a3a" stroke-width="1.2"/></svg>
<div class="t" style="left:993.2px;top:128.57px;font-size:7px;color:#e0e0e0;font-weight:bold;font-family:'Liberation Sans';transform-origin:0 0;transform:scaleX(0.8642);">Facing Pages</div>
<div class="t" style="left:903px;top:145.01px;font-size:7.2px;color:#e6e6e6;font-weight:bold;font-family:'Liberation Sans';transform-origin:0 0;transform:scaleX(0.8492);">Margins</div>
<svg style="left:903.4px;top:159.3px;" width="11" height="12" viewBox="0 0 11 12"><rect x="0.5" y="4.5" width="10" height="7" fill="none" stroke="#cfcfcf" stroke-width=".9"/><rect x="0" y="0.5" width="11" height="2.5" fill="#cfcfcf"/></svg>
<svg style="left:903.4px;top:175.8px;" width="11" height="12" viewBox="0 0 11 12"><rect x="0.5" y="0.5" width="10" height="7" fill="none" stroke="#cfcfcf" stroke-width=".9"/><rect x="0" y="9" width="11" height="2.5" fill="#cfcfcf"/></svg>
<svg style="left:981.8px;top:159.8px;" width="11" height="11" viewBox="0 0 11 11"><rect x="0.5" y="0.5" width="7" height="10" fill="none" stroke="#cfcfcf" stroke-width=".9"/><rect x="8.5" y="0" width="2.5" height="11" fill="#cfcfcf"/></svg>
<svg style="left:981.8px;top:176.3px;" width="11" height="11" viewBox="0 0 11 11"><rect x="3.5" y="0.5" width="7" height="10" fill="none" stroke="#cfcfcf" stroke-width=".9"/><rect x="0" y="0" width="2.5" height="11" fill="#cfcfcf"/></svg>
<div class="a" style="left:916px;top:159px;width:10.4px;height:12.2px;background:#464646;border:1px solid #5e5e5e"></div>
<svg style="left:916px;top:159px;" width="10.4" height="12.2" viewBox="0 0 10.4 12.2"><path d="M3.0 4.5 L5.2 2.3 L7.4 4.5 M3.0 7.7 L5.2 9.9 L7.4 7.7" fill="none" stroke="#d8d8d8" stroke-width="1.15"/></svg>
<div class="a" style="left:926.4px;top:159px;width:34.1px;height:12.2px;background:#444444;border:1px solid #5e5e5e"></div>
<div class="t" style="left:930.1px;top:161.97px;font-size:7px;color:#e8e8e8;font-weight:bold;font-family:'Liberation Sans';transform-origin:0 0;transform:scaleX(0.9530);">12,7 mm</div>
<div class="a" style="left:916px;top:175.6px;width:10.4px;height:11.6px;background:#464646;border:1px solid #5e5e5e"></div>
<svg style="left:916px;top:175.6px;" width="10.4" height="11.6" viewBox="0 0 10.4 11.6"><path d="M3.0 4.2 L5.2 2.0 L7.4 4.2 M3.0 7.4 L5.2 9.6 L7.4 7.4" fill="none" stroke="#d8d8d8" stroke-width="1.15"/></svg>
<div class="a" style="left:926.4px;top:175.6px;width:34.1px;height:11.6px;background:#444444;border:1px solid #5e5e5e"></div>
<div class="t" style="left:930.1px;top:177.87px;font-size:7px;color:#e8e8e8;font-weight:bold;font-family:'Liberation Sans';transform-origin:0 0;transform:scaleX(0.9530);">12,7 mm</div>
<div class="a" style="left:994.7px;top:159px;width:10.8px;height:12.2px;background:#464646;border:1px solid #5e5e5e"></div>
<svg style="left:994.7px;top:159px;" width="10.8" height="12.2" viewBox="0 0 10.8 12.2"><path d="M3.2 4.5 L5.4 2.3 L7.6 4.5 M3.2 7.7 L5.4 9.9 L7.6 7.7" fill="none" stroke="#d8d8d8" stroke-width="1.15"/></svg>
<div class="a" style="left:1005.5px;top:159px;width:34.1px;height:12.2px;background:#444444;border:1px solid #5e5e5e"></div>
<div class="t" style="left:1008.8px;top:161.97px;font-size:7px;color:#e8e8e8;font-weight:bold;font-family:'Liberation Sans';transform-origin:0 0;transform:scaleX(0.9530);">12,7 mm</div>
<div class="a" style="left:994.7px;top:175.6px;width:10.8px;height:11.6px;background:#464646;border:1px solid #5e5e5e"></div>
<svg style="left:994.7px;top:175.6px;" width="10.8" height="11.6" viewBox="0 0 10.8 11.6"><path d="M3.2 4.2 L5.4 2.0 L7.6 4.2 M3.2 7.4 L5.4 9.6 L7.6 7.4" fill="none" stroke="#d8d8d8" stroke-width="1.15"/></svg>
<div class="a" style="left:1005.5px;top:175.6px;width:34.1px;height:11.6px;background:#444444;border:1px solid #5e5e5e"></div>
<div class="t" style="left:1008.8px;top:177.87px;font-size:7px;color:#e8e8e8;font-weight:bold;font-family:'Liberation Sans';transform-origin:0 0;transform:scaleX(0.9530);">12,7 mm</div>
<div class="a" style="left:965px;top:165.5px;width:12.9px;height:13.4px;background:#333"></div>
<svg style="left:968px;top:167.5px;" width="7" height="10" viewBox="0 0 7 10"><rect x="1.2" y="0.6" width="4.6" height="4.8" rx="2.3" fill="none" stroke="#ddd" stroke-width="1"/><rect x="1.2" y="4.6" width="4.6" height="4.8" rx="2.3" fill="none" stroke="#ddd" stroke-width="1"/></svg>
<div class="a" style="left:903.4px;top:197.1px;width:136.8px;height:12.3px;background:#515151;border:1px solid #636363;border-radius:1px"></div>
<div class="t" style="left:950.6px;top:200.07px;font-size:7px;color:#e8e8e8;font-weight:bold;font-family:'Liberation Sans';transform-origin:0 0;transform:scaleX(0.8893);">Adjust Layout</div>
<div class="a" style="left:897px;top:213px;width:157px;height:1px;background:#4b4b4b"></div>
<div class="t" style="left:903px;top:220.71px;font-size:7.2px;color:#e6e6e6;font-weight:bold;font-family:'Liberation Sans';transform-origin:0 0;transform:scaleX(0.8033);">Page</div>
<div class="a" style="left:904px;top:234.6px;width:56.5px;height:12.3px;background:#444444;border:1px solid #5e5e5e"></div>
<div class="a" style="left:950.5px;top:234.6px;width:10px;height:12.3px;background:#4a4a4a;border:1px solid #5e5e5e"></div>
<div class="t" style="left:905.5px;top:237.57px;font-size:7px;color:#e8e8e8;font-weight:bold;font-family:'Liberation Sans';transform-origin:0 0;transform:scaleX(0.8990);">1</div>
<svg style="left:952.5px;top:239.1px;" width="6" height="4" viewBox="0 0 6 4"><path d="M0.7 0.7 L3 3 L5.3 0.7" fill="none" stroke="#e0e0e0" stroke-width="1.2"/></svg>
<svg style="left:1009.7px;top:237.5px;" width="9" height="9" viewBox="0 0 9 9"><rect x="0.5" y="0.5" width="8" height="8" fill="none" stroke="#d0d0d0" stroke-width=".9"/><path d="M4.5 2.3 V6.7 M2.3 4.5 H6.7" stroke="#d0d0d0" stroke-width=".9"/></svg>
<svg style="left:1027px;top:236.5px;" width="8" height="10" viewBox="0 0 8 10"><path d="M0.5 2.5 H7.5 M2.5 2.5 V1 H5.5 V2.5 M1.3 2.5 L1.8 9.5 H6.2 L6.7 2.5 Z" fill="#6b6b6b" stroke="#6b6b6b" stroke-width=".8"/></svg>
<div class="a" style="left:903.4px;top:252px;width:136.8px;height:12.2px;background:#515151;border:1px solid #636363;border-radius:1px"></div>
<div class="t" style="left:957.6px;top:255.37px;font-size:7px;color:#e8e8e8;font-weight:bold;font-family:'Liberation Sans';transform-origin:0 0;transform:scaleX(0.8590);">Edit Page</div>
<div class="a" style="left:897px;top:269px;width:157px;height:1px;background:#4b4b4b"></div>
<div class="t" style="left:903px;top:279.31px;font-size:7.2px;color:#e6e6e6;font-weight:bold;font-family:'Liberation Sans';transform-origin:0 0;transform:scaleX(0.8405);">Rulers &amp; Grids</div>
<div class="a" style="left:979.1px;top:276.1px;width:12.6px;height:13.1px;background:#2e2e2e;border:1px solid #444"></div>
<svg style="left:980.1px;top:277.1px;" width="11" height="11" viewBox="0 0 11 11"><path d="M1 10.5 V1 H10 V3 H3 V10.5 Z" fill="#d8d8d8"/></svg>
<svg style="left:1003.5px;top:277px;" width="11.5" height="12" viewBox="0 0 11.5 12"><rect x="0.5" y="0.5" width="10.5" height="11" fill="none" stroke="#cfcfcf" stroke-width=".8"/><path d="M0.5 2.8 H11 M0.5 5 H11 M0.5 7.2 H11 M0.5 9.4 H11 M2.6 0.5 V11.5 M8.9 0.5 V11.5" stroke="#cfcfcf" stroke-width=".6"/></svg>
<svg style="left:1027.3px;top:277px;" width="11" height="12" viewBox="0 0 11 12"><rect x="0.5" y="0.5" width="10" height="11" fill="none" stroke="#cfcfcf" stroke-width=".8"/><path d="M0.5 3.3 H10.5 M0.5 6 H10.5 M0.5 8.7 H10.5 M3 0.5 V11.5 M5.5 0.5 V11.5 M8 0.5 V11.5" stroke="#cfcfcf" stroke-width=".7"/></svg>
<div class="a" style="left:897px;top:293px;width:157px;height:1px;background:#4b4b4b"></div>
<div class="t" style="left:903px;top:303.91px;font-size:7.2px;color:#e6e6e6;font-weight:bold;font-family:'Liberation Sans';transform-origin:0 0;transform:scaleX(0.8373);">Guides</div>
<div class="a" style="left:978.3px;top:301.1px;width:13.4px;height:12.9px;background:#2f2f2f;border:1px solid #454545"></div>
<div class="a" style="left:1002px;top:301.1px;width:13.4px;height:12.9px;background:#2f2f2f;border:1px solid #454545"></div>
<div class="a" style="left:1025.8px;top:301.1px;width:13.4px;height:12.9px;background:#2f2f2f;border:1px solid #454545"></div>
<svg style="left:979.8px;top:302.6px;" width="10" height="10" viewBox="0 0 10 10"><path d="M3 0 V10 M5.5 0 V10 M1 3 H9.5 M1 6.5 H9.5" stroke="#d8d8d8" stroke-width=".8"/></svg>
<svg style="left:1003.5px;top:302.6px;" width="11" height="10" viewBox="0 0 11 10"><path d="M2.5 0 V8 M5 0 V8 M0.5 2.5 H8 M0.5 5.5 H8" stroke="#d8d8d8" stroke-width=".8"/><rect x="6.5" y="6.5" width="4" height="3.5" fill="#d8d8d8"/></svg>
<svg style="left:1027.3px;top:302.6px;" width="11" height="10" viewBox="0 0 11 10"><path d="M2.5 0 V9 M0.5 2.5 H6" stroke="#d8d8d8" stroke-width=".8"/><path d="M9.5 4.5 C8.5 3.8 6.5 4 6.8 5.5 C7 6.7 9.8 6.5 9.8 8 C9.8 9.6 7.3 9.7 6.4 8.8" fill="none" stroke="#d8d8d8" stroke-width="1.1"/></svg>
<div class="a" style="left:897px;top:319.5px;width:157px;height:1px;background:#4b4b4b"></div>
<div class="t" style="left:903px;top:323.21px;font-size:7.2px;color:#e6e6e6;font-weight:bold;font-family:'Liberation Sans';transform-origin:0 0;transform:scaleX(0.8525);">Quick Actions</div>
<div class="a" style="left:903.1px;top:336px;width:65.6px;height:13.6px;background:#515151;border:1px solid #636363;border-radius:1px"></div>
<div class="t" style="left:919px;top:339.67px;font-size:7px;color:#e8e8e8;font-weight:bold;font-family:'Liberation Sans';transform-origin:0 0;transform:scaleX(0.9223);">Import File</div>
<div class="a" style="left:975.4px;top:336px;width:64.8px;height:13.6px;background:#515151;border:1px solid #636363;border-radius:1px"></div>
<div class="t" style="left:986.5px;top:339.67px;font-size:7px;color:#e8e8e8;font-weight:bold;font-family:'Liberation Sans';transform-origin:0 0;transform:scaleX(0.9372);">Text to Image</div>
<div class="a" style="left:1054px;top:28px;width:25px;height:596px;background:#525252;border-left:1px solid #383838"></div>
<svg style="left:1060px;top:38px;" width="14" height="11" viewBox="0 0 14 11"><path d="M7 0.8 C11 0.8 13.4 3 13.4 5.4 C13.4 7.4 11.5 7 10.5 7.6 C9.5 8.2 10.3 10.2 7.5 10.2 C3.5 10.2 0.6 8 0.6 5.4 C0.6 2.8 3.2 0.8 7 0.8 Z" fill="#d6d6d6"/><circle cx="4" cy="6" r="1.1" fill="#474747"/><circle cx="6.5" cy="3.3" r="1.1" fill="#474747"/><circle cx="10" cy="3.6" r="1.1" fill="#474747"/><circle cx="7" cy="7.6" r="1.1" fill="#474747"/></svg>
<svg style="left:1061px;top:56px;" width="12" height="13" viewBox="0 0 12 13"><path d="M0.5 3 L5.6 2 V12 L0.5 11.4 Z M6.4 2 L11.5 3 V11.4 L6.4 12 Z" fill="#d6d6d6"/><path d="M6 0 V2" stroke="#d6d6d6" stroke-width="1"/><path d="M3 5 V9 M9 5 V9" stroke="#474747" stroke-width=".8"/></svg>
<svg style="left:1061px;top:73px;" width="13" height="12" viewBox="0 0 13 12"><path d="M6.5 0.5 L12.3 3.6 L6.5 6.7 L0.7 3.6 Z" fill="#d6d6d6"/><path d="M1 6.6 L6.5 9.6 L12 6.6" fill="none" stroke="#d6d6d6" stroke-width="1.4"/></svg>
<svg style="left:1060px;top:92.5px;" width="14" height="8" viewBox="0 0 14 8"><rect x="0.8" y="0.8" width="7.4" height="6" rx="3" fill="none" stroke="#d6d6d6" stroke-width="1.5"/><rect x="5.8" y="0.8" width="7.4" height="6" rx="3" fill="none" stroke="#d6d6d6" stroke-width="1.5"/></svg>
<div class="a" style="left:1059px;top:107px;width:16px;height:14px;background:#2f2f2f"></div>
<svg style="left:1061px;top:108px;" width="12" height="12" viewBox="0 0 12 12"><path d="M0.5 2.5 H11.5 M0.5 6 H11.5 M0.5 9.5 H11.5" stroke="#d6d6d6" stroke-width=".9"/><rect x="6" y="1.2" width="3" height="2.6" rx="1" fill="#2f2f2f" stroke="#d6d6d6" stroke-width=".8"/><rect x="2.5" y="4.7" width="3" height="2.6" rx="1" fill="#2f2f2f" stroke="#d6d6d6" stroke-width=".8"/><rect x="6" y="8.2" width="3" height="2.6" rx="1" fill="#2f2f2f" stroke="#d6d6d6" stroke-width=".8"/></svg>
<div class="a" style="left:1056px;top:121px;width:23px;height:1px;background:#3a3a3a"></div>
<div class="a" style="left:1061px;top:32px;width:12px;height:1px;background:#5f5f5f"></div>
<div class="a" style="left:5px;top:39px;width:17px;height:14px;background:#2f2f2f;border-radius:1px"></div>
<svg style="left:9px;top:40px;" width="10" height="12" viewBox="0 0 10 12"><path d="M1.5 1.2 L8.6 7.2 L5.2 7.9 L2.2 10.8 Z" fill="none" stroke="#d4d4d4" stroke-width="1.1" stroke-linejoin="round"/></svg>
<svg style="left:28px;top:40px;" width="10" height="12" viewBox="0 0 10 12"><path d="M1 1 L8.8 7.4 L4.6 8.3 L2 11 Z" fill="#d4d4d4"/></svg>
<svg style="left:8px;top:55px;" width="12" height="11" viewBox="0 0 12 11"><path d="M1 0.8 H4.2 L5.8 2.4 V5.5 M1 0.8 V9.8 H5.5" fill="none" stroke="#d4d4d4" stroke-width="1.1"/><path d="M6.2 5.6 L10.6 8.6 L8.4 8.9 L7 10.8 Z" fill="#d4d4d4"/></svg>
<svg style="left:26px;top:55px;" width="13" height="11" viewBox="0 0 13 11"><path d="M1 0.5 V10.5 M12 0.5 V10.5" stroke="#d4d4d4" stroke-width="1.4"/><path d="M2.8 5.5 H10.2" stroke="#d4d4d4" stroke-width="1.2"/><circle cx="3" cy="5.5" r="1" fill="#d4d4d4"/><circle cx="10" cy="5.5" r="1" fill="#d4d4d4"/></svg>
<svg style="left:8px;top:70px;" width="11" height="11" viewBox="0 0 11 11"><path d="M0.8 4 V10.2 H10.2 V4" fill="none" stroke="#d4d4d4" stroke-width="1.1"/><rect x="2" y="6" width="7" height="3.2" fill="#6e6e6e"/><path d="M2 1.2 L5 4.5" stroke="#d4d4d4" stroke-width="1"/><rect x="4" y="2.8" width="2.6" height="2.6" fill="#d4d4d4"/></svg>
<svg style="left:27px;top:70px;" width="11" height="11" viewBox="0 0 11 11"><path d="M0.8 4 V10.2 H10.2 V4" fill="none" stroke="#d4d4d4" stroke-width="1.1"/><rect x="2" y="6" width="7" height="3.2" fill="#6e6e6e"/><path d="M5.5 5 L8.5 1.5" stroke="#d4d4d4" stroke-width="1"/><rect x="7.4" y="0.6" width="2.4" height="2.4" fill="#d4d4d4"/></svg>
<div class="a" style="left:5px;top:84px;width:37px;height:1px;background:#4a4a4a"></div>
<div class="t" style="left:8.3px;top:86px;font-size:13px;font-family:'Liberation Serif',serif;font-weight:bold;color:#d4d4d4">T</div>
<div class="a" style="left:19.5px;top:97.5px;width:1.5px;height:1.5px;background:#d4d4d4"></div>
<svg style="left:26px;top:87px;" width="11" height="11" viewBox="0 0 11 11"><path d="M1 10 L10 1" stroke="#d4d4d4" stroke-width="1.2"/></svg>
<svg style="left:6px;top:101px;" width="14" height="13" viewBox="0 0 14 13"><path d="M1 3 H5 M3 1 V5" stroke="#d4d4d4" stroke-width="1.2"/><path d="M12.5 3.2 L10.2 1 L8.6 2.6 L10.8 4.8 Z" fill="#d4d4d4"/><path d="M8.2 3.2 L10.3 5.3 L8.5 9.6 L4 11.8 L3.4 11.2 L5.5 6.6 Z" fill="#d4d4d4"/><path d="M3.6 11 L6.8 7.8" stroke="#515151" stroke-width=".8"/><circle cx="7.4" cy="7.3" r=".9" fill="#515151"/></svg>
<div class="a" style="left:19.5px;top:112.5px;width:1.5px;height:1.5px;background:#d4d4d4"></div>
<svg style="left:26px;top:101px;" width="12" height="12" viewBox="0 0 12 12"><path d="M3.3 11 L1 11 L1 8.7 L8 1.7 L10.3 4 Z" fill="#d4d4d4"/><path d="M6.8 2.9 L9.1 5.2" stroke="#515151" stroke-width=".8"/></svg>
<div class="a" style="left:38.5px;top:112.5px;width:1.5px;height:1.5px;background:#d4d4d4"></div>
<svg style="left:8px;top:118px;" width="11" height="10" viewBox="0 0 11 10"><rect x="0.5" y="0.5" width="10" height="9" fill="none" stroke="#d4d4d4" stroke-width="1"/><path d="M2.5 2.2 L8.5 7.8 M8.5 2.2 L2.5 7.8" stroke="#d4d4d4" stroke-width="1.1"/></svg>
<div class="a" style="left:19.5px;top:127.5px;width:1.5px;height:1.5px;background:#d4d4d4"></div>
<svg style="left:27px;top:118px;" width="11" height="10" viewBox="0 0 11 10"><rect x="0.5" y="0.5" width="10" height="9" fill="#636363" stroke="#d4d4d4" stroke-width="1"/></svg>
<div class="a" style="left:38.5px;top:127.5px;width:1.5px;height:1.5px;background:#d4d4d4"></div>
<div class="a" style="left:5px;top:132px;width:37px;height:1px;background:#4a4a4a"></div>
<svg style="left:8px;top:134px;" width="12" height="11" viewBox="0 0 12 11"><circle cx="9.3" cy="2.3" r="1.8" fill="none" stroke="#d4d4d4" stroke-width="1.1"/><circle cx="9.3" cy="8.7" r="1.8" fill="none" stroke="#d4d4d4" stroke-width="1.1"/><path d="M7.8 3.4 L0.5 8.8 M7.8 7.6 L0.5 2.2" stroke="#d4d4d4" stroke-width="1.1"/></svg>
<svg style="left:26px;top:134px;" width="13" height="11" viewBox="0 0 13 11"><rect x="0.6" y="4.6" width="6.4" height="5.8" fill="none" stroke="#d4d4d4" stroke-width="1"/><rect x="3.6" y="0.6" width="8.8" height="7" fill="none" stroke="#d4d4d4" stroke-width="1"/><path d="M6 5.5 L10 2 M8 1.8 H10.2 V4" fill="none" stroke="#d4d4d4" stroke-width="1"/></svg>
<div class="a" style="left:38px;top:145px;width:1.5px;height:1.5px;background:#d4d4d4"></div>
<div class="a" style="left:8px;top:149px;width:11px;height:10px;background:linear-gradient(90deg,#111,#e8e8e8);border:1px solid #d0d0d0"></div>
<svg style="left:27px;top:149px;" width="11" height="10" viewBox="0 0 11 10"><rect x="0.5" y="0.5" width="10" height="9" fill="#3a3a3a" stroke="#d4d4d4" stroke-width="1"/><circle cx="3.3" cy="5.5" r="2" fill="#1e1e1e"/><circle cx="7.7" cy="5.5" r="2" fill="#1e1e1e"/><path d="M1 2.3 H10" stroke="#d4d4d4" stroke-width=".8" stroke-dasharray="1 1"/></svg>
<div class="a" style="left:5px;top:163px;width:37px;height:1px;background:#4a4a4a"></div>
<svg style="left:9px;top:166px;" width="9" height="11" viewBox="0 0 9 11"><rect x="0.5" y="0.5" width="8" height="10" fill="none" stroke="#d4d4d4" stroke-width="1"/><path d="M2 3 H7 M2 5 H7 M2 7 H7" stroke="#d4d4d4" stroke-width="1"/></svg>
<svg style="left:26px;top:165px;" width="12" height="12" viewBox="0 0 12 12"><path d="M1.5 10.5 L1.3 8.8 L6.8 3.3 L8.7 5.2 L3.2 10.7 Z" fill="none" stroke="#d4d4d4" stroke-width="1"/><path d="M6.2 2.7 L8.6 0.6 L11.4 3.4 L9.3 5.8 Z" fill="#d4d4d4"/></svg>
<div class="a" style="left:38px;top:177px;width:1.5px;height:1.5px;background:#d4d4d4"></div>
<svg style="left:8px;top:180px;" width="11" height="12" viewBox="0 0 11 12"><path d="M3 11.5 L0.7 7.2 C0.3 6.4 1.3 5.8 1.9 6.5 L2.8 7.6 V2.3 C2.8 1.5 4 1.5 4 2.3 V5.5 V1.2 C4 0.4 5.3 0.4 5.3 1.2 V5.5 V1.5 C5.3 0.7 6.6 0.7 6.6 1.5 V5.5 V2.6 C6.6 1.8 7.8 1.8 7.8 2.6 V5.8 L8.6 4.6 C9.2 3.9 10.3 4.3 9.9 5.2 L8.5 9 C8.1 10.3 7.3 11.5 6.2 11.5 Z" fill="#d4d4d4"/></svg>
<svg style="left:27px;top:181px;" width="11" height="11" viewBox="0 0 11 11"><circle cx="4.3" cy="4.3" r="3.5" fill="none" stroke="#d4d4d4" stroke-width="1.1"/><path d="M6.8 6.8 L10.3 10.3" stroke="#d4d4d4" stroke-width="1.5"/></svg>
<div class="a" style="left:6px;top:197px;width:22px;height:21px;background:#f4f4f4"></div>
<svg style="left:6px;top:197px;" width="22" height="21" viewBox="0 0 22 21"><path d="M0.5 20.5 L21.5 0.5" stroke="#e0292b" stroke-width="1.3"/></svg>
<div class="a" style="left:18px;top:209px;width:21px;height:21px;background:#000"></div>
<div class="a" style="left:24px;top:215px;width:9px;height:9px;background:#5a5a5a"></div>
<svg style="left:35px;top:197px;" width="8" height="8" viewBox="0 0 8 8"><path d="M1 1.5 H5.5 V6.5 M3.8 4.8 L5.5 6.5 L7.2 4.8" fill="none" stroke="#d4d4d4" stroke-width=".9"/></svg>
<svg style="left:6px;top:221px;" width="10" height="10" viewBox="0 0 10 10"><rect x="3" y="3" width="6" height="6" fill="#111" stroke="#ddd" stroke-width=".8"/><rect x="0.8" y="0.8" width="5" height="5" fill="#eee" stroke="#333" stroke-width=".6"/></svg>
<div class="a" style="left:9px;top:236px;width:11px;height:10px;background:#333;border:1px solid #2a2a2a"></div>
<div class="a" style="left:12px;top:239px;width:5px;height:4px;background:#888;border:1px solid #bbb"></div>
<div class="t" style="left:25.5px;top:235.5px;font-size:10px;font-family:'Liberation Serif',serif;color:#d4d4d4">T</div>
<div class="a" style="left:5px;top:251px;width:11px;height:11px;background:#000;border:1px solid #777"></div>
<div class="a" style="left:18px;top:251px;width:10px;height:11px;background:linear-gradient(90deg,#555,#eee,#555)"></div>
<div class="a" style="left:31px;top:251px;width:9px;height:10px;background:#f2f2f2"></div>
<svg style="left:31px;top:251px;" width="9" height="10" viewBox="0 0 9 10"><path d="M0.3 9.7 L8.7 0.3" stroke="#e0292b" stroke-width="1.2"/></svg>
<div class="a" style="left:40px;top:261px;width:1px;height:1px;background:#ddd"></div>
<svg style="left:9px;top:267px;" width="12" height="10" viewBox="0 0 12 10"><rect x="0.5" y="3" width="8" height="6.5" fill="#d4d4d4" opacity=".85"/><path d="M2 0.5 V3 M0 1.5 H4" stroke="#d4d4d4" stroke-width=".8"/><path d="M9 4 H11.5 M9 6.5 H11.5" stroke="#d4d4d4" stroke-width=".8"/></svg>
<svg style="left:8px;top:284px;" width="11" height="11" viewBox="0 0 11 11"><rect x="0.5" y="0.5" width="10" height="10" fill="#6a6a6a" stroke="#d4d4d4" stroke-width=".8"/><rect x="2.5" y="2.5" width="6" height="6" fill="#aaa"/></svg>
<div class="a" style="left:23px;top:283px;width:18px;height:16px;background:#2e2e2e"></div>
<svg style="left:27px;top:286px;" width="11" height="10" viewBox="0 0 11 10"><rect x="0.5" y="0.5" width="10" height="9" fill="#555" stroke="#d4d4d4" stroke-width=".8"/><rect x="0.5" y="0.5" width="10" height="2" fill="#d4d4d4"/></svg>
<div class="a" style="left:39px;top:297px;width:1px;height:1px;background:#ddd"></div>
<div class="a" style="left:56px;top:603px;width:963px;height:11px;background:#bbbbbb"></div>
<div class="a" style="left:896px;top:603px;width:123px;height:11px;background:#c4c4c4;border-right:1px solid #d8d8d8;border-bottom:1px solid #d0d0d0"></div>
<div class="a" style="left:1019px;top:603px;width:35px;height:21px;background:#3b3b3b"></div>
<div class="a" style="left:1029px;top:603px;width:25px;height:21px;background:#474747;border-left:1px solid #404040"></div>
<div class="a" style="left:46px;top:614px;width:973px;height:10px;background:#434343"></div>
<div class="t" style="left:54.8px;top:616.07px;font-size:7px;color:#e0e0e0;font-weight:bold;font-family:'Liberation Sans';transform-origin:0 0;transform:scaleX(0.9267);">40,66%</div>
<svg style="left:81px;top:617px;" width="7" height="5" viewBox="0 0 7 5"><path d="M1 1 L3.5 3.5 L6 1" fill="none" stroke="#ddd" stroke-width="1"/></svg>
<svg style="left:94px;top:616px;" width="7" height="7" viewBox="0 0 7 7"><path d="M1 0.5 V6.5 M6 0.5 L2.5 3.5 L6 6.5" fill="none" stroke="#777" stroke-width="1"/></svg>
<svg style="left:107px;top:616px;" width="6" height="7" viewBox="0 0 6 7"><path d="M5 0.5 L1.5 3.5 L5 6.5" fill="none" stroke="#777" stroke-width="1"/></svg>
<div class="a" style="left:119px;top:614px;width:45px;height:10px;background:#383838"></div>
<div class="t" style="left:122.5px;top:616.07px;font-size:7px;color:#e0e0e0;font-weight:bold;font-family:'Liberation Sans';transform-origin:0 0;transform:scaleX(0.8990);">1</div>
<div class="a" style="left:164px;top:614px;width:11px;height:10px;background:#3e3e3e;border-left:1px solid #4a4a4a"></div>
<svg style="left:166.5px;top:617px;" width="7" height="5" viewBox="0 0 7 5"><path d="M1 1 L3.5 3.5 L6 1" fill="none" stroke="#ddd" stroke-width="1"/></svg>
<svg style="left:181px;top:616px;" width="6" height="7" viewBox="0 0 6 7"><path d="M1 0.5 L4.5 3.5 L1 6.5" fill="none" stroke="#777" stroke-width="1"/></svg>
<svg style="left:212px;top:615px;" width="8" height="8" viewBox="0 0 8 8"><circle cx="4" cy="4" r="3" fill="none" stroke="#ccc" stroke-width="1.2"/></svg>
<div class="t" style="left:231px;top:615.57px;font-size:7px;color:#c8c8c8;font-weight:bold;font-family:'Liberation Sans';transform-origin:0 0;transform:scaleX(0.8629);">[Basic] (working)</div>
<svg style="left:297px;top:616px;" width="5" height="7" viewBox="0 0 5 7"><path d="M1 0.5 L4 3.5 L1 6.5" fill="none" stroke="#888" stroke-width="1"/></svg>
<div class="a" style="left:310px;top:615px;width:7px;height:7px;border-radius:50%;background:#3ea34a"></div>
<div class="t" style="left:320px;top:615.57px;font-size:7px;color:#c8c8c8;font-weight:bold;font-family:'Liberation Sans';transform-origin:0 0;transform:scaleX(0.8251);">No errors</div>
<svg style="left:1007.5px;top:617px;" width="10" height="7" viewBox="0 0 10 7"><rect x="0.5" y="0.5" width="4" height="6" fill="none" stroke="#ddd" stroke-width=".9"/><rect x="5.5" y="0.5" width="4" height="6" fill="none" stroke="#ddd" stroke-width=".9"/></svg>
<div class="a" style="left:185px;top:619px;width:712px;height:30px;background:#2a2a2a;border-radius:11px;border:1px solid #5a5a5a"></div>
<div class="a" style="left:893px;top:619.5px;width:93px;height:30px;background:#5a5a5a;border-radius:0 10px 10px 0"></div>
</body></html>
